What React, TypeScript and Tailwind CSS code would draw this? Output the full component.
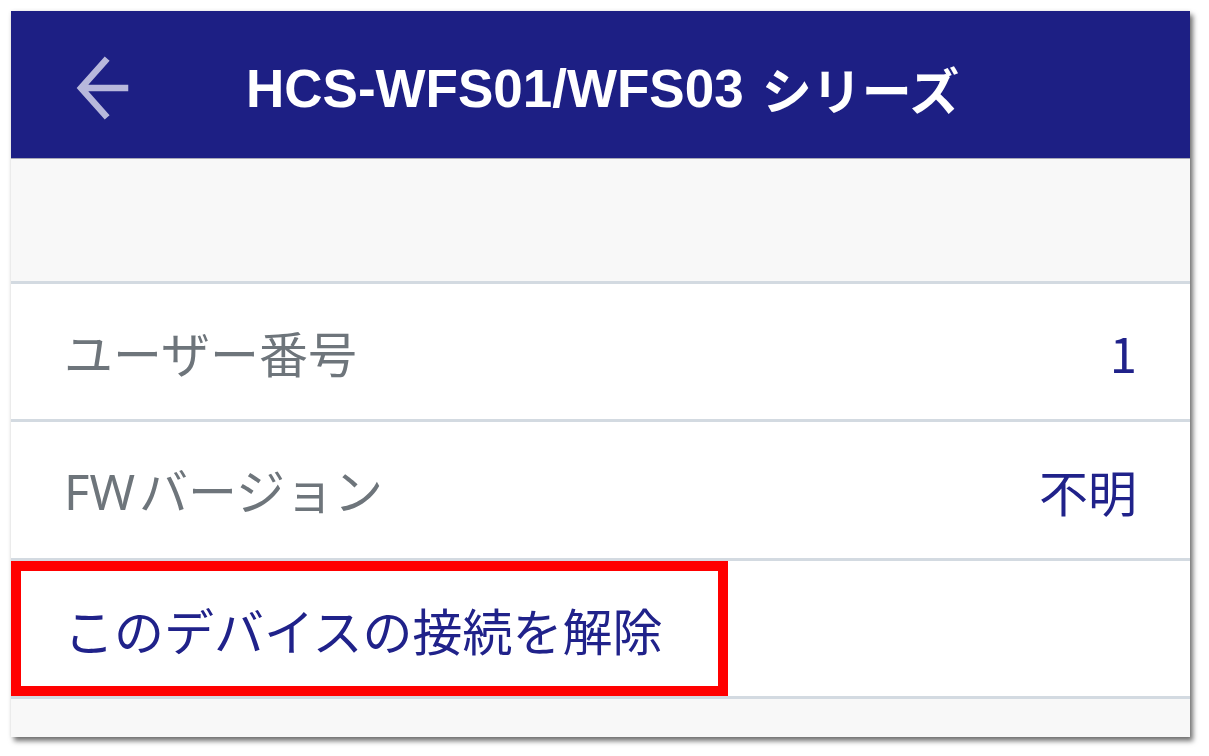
const jp = { fontFamily: '"Noto Sans CJK JP", "Noto Sans", sans-serif' };

function BackArrow() {
    return (
        <svg width="56" height="66" viewBox="0 0 56 66" fill="none">
            <path
                d="M50 33 H8 M30 6 L6 33 L30 60"
                stroke="#b8b8dc"
                strokeWidth="6.5"
                strokeLinecap="square"
                strokeLinejoin="miter"
            />
        </svg>
    );
}

function Row({ label, value, h }: { label: React.ReactNode; value: string; h: string }) {
    return (
        <div className={`flex items-center justify-between ${h} bg-white pl-[53px] pr-[53px] border-b-[3px] border-[#d3dae1]`}>
            <span className="text-[49px] text-[#6e757b] leading-none">{label}</span>
            <span className="text-[49px] text-[#20228a] leading-none">{value}</span>
        </div>
    );
}

export default function App() {
    return (
        <div className="min-h-screen w-full bg-white pt-[11px] pl-[11px]" style={jp}>
            <div className="w-[1179px] h-[726px] bg-[#f8f8f8] flex flex-col shadow-[3px_4px_5px_rgba(0,0,0,0.55),0_0_4px_rgba(0,0,0,0.08)]">
                <header className="h-[148px] pt-[7px] bg-[#1d1f84] border-b border-[#a9a9b8] flex items-center">
                    <div className="w-[235px] pl-[64px] flex items-center">
                        <BackArrow />
                    </div>
                    <h1 className="text-white font-bold text-[53px] leading-none flex items-center">
                        <span style={{ fontFamily: '"Liberation Sans", "Noto Sans CJK JP", sans-serif' }}>HCS-WFS01/WFS03</span>
                        <span className="ml-[18px] text-[50px]">シリーズ</span>
                    </h1>
                </header>
                <div className="h-[125px] border-b-[3px] border-[#d3dae1]" />
                <Row h="h-[138px]" label="ユーザー番号" value="1" />
                <Row
                    h="h-[139px]"
                    label={
                        <>
                            <span style={{ fontFamily: '"Noto Sans", sans-serif' }}>FW</span>
                            <span className="ml-[4px]">バージョン</span>
                        </>
                    }
                    value="不明"
                />
                <div className="relative h-[138px] bg-white border-b-[3px] border-[#d3dae1] flex items-center pl-[53px]">
                    <span className="text-[50px] text-[#20228a] leading-none">このデバイスの接続を解除</span>
                    <div className="absolute left-0 top-0 w-[717px] h-[135px] border-[10px] border-[#ff0000]" />
                </div>
                <div className="flex-1" />
            </div>
        </div>
    );
}
